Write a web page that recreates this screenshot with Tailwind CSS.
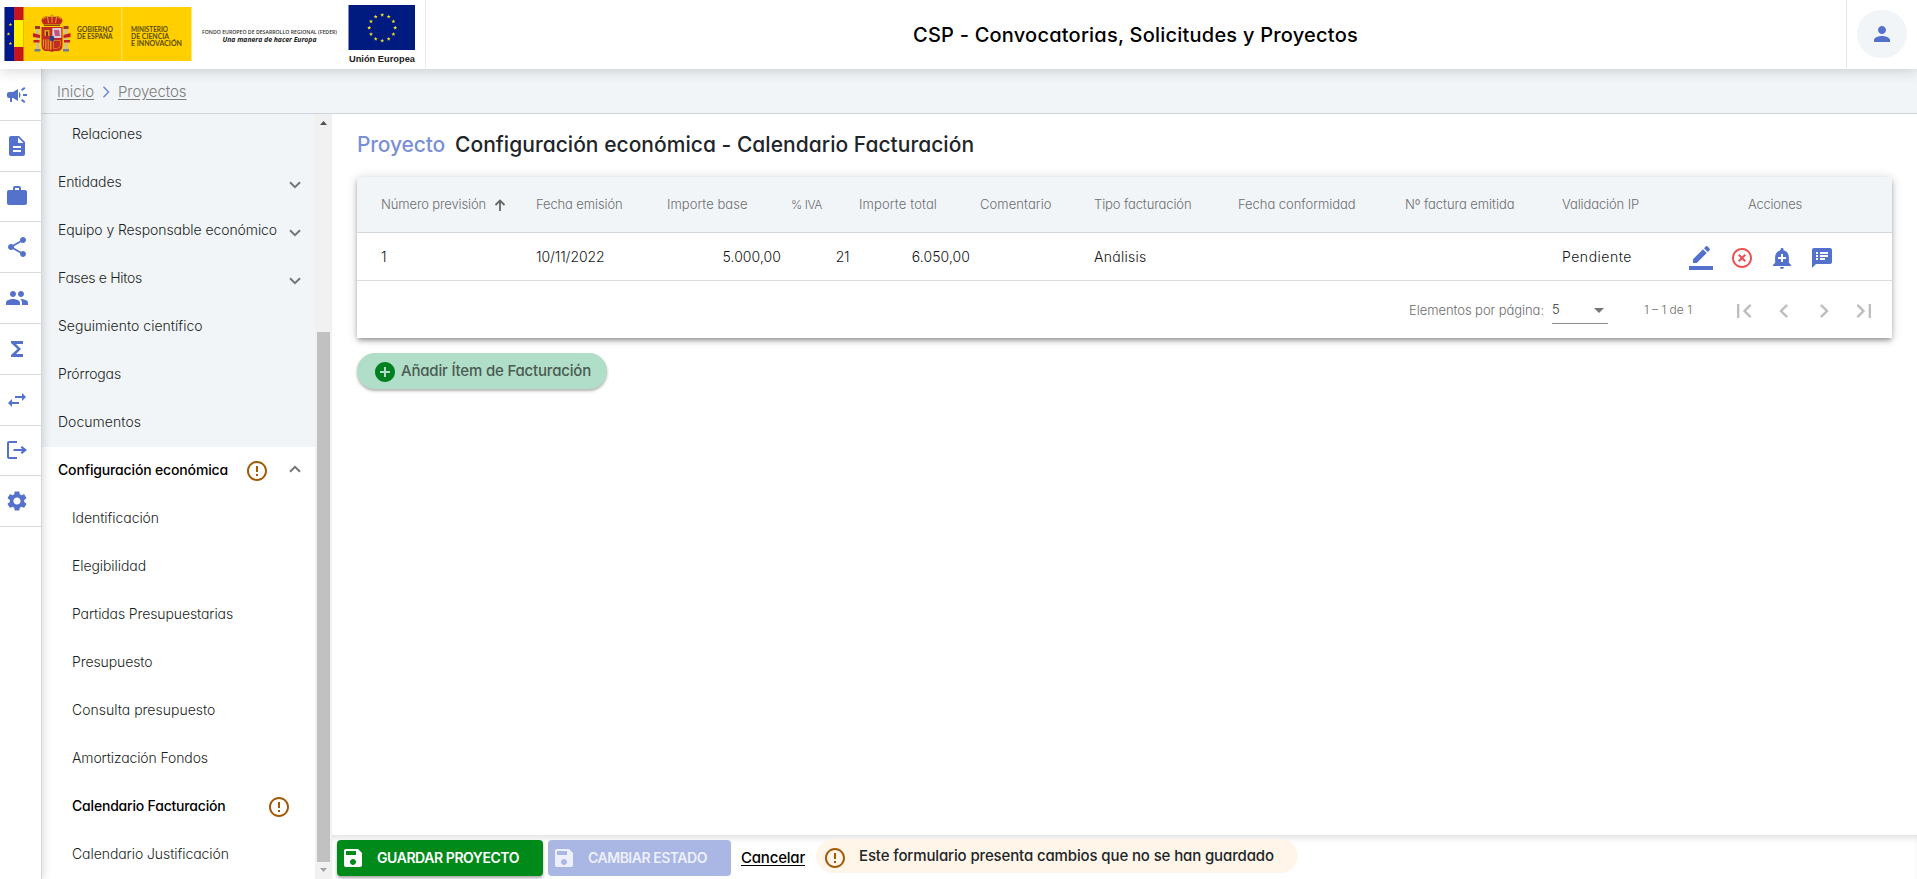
<!DOCTYPE html>
<html lang="es">
<head>
<meta charset="utf-8">
<title>CSP - Convocatorias, Solicitudes y Proyectos</title>
<script src="https://cdn.jsdelivr.net/npm/@tailwindcss/browser@4"></script>
</head>
<body class="flex h-[879px] w-[1917px] flex-col overflow-hidden bg-white font-['Inter',sans-serif] text-[#212529] [font-feature-settings:'cv11']">
<svg class="hidden">
  <symbol id="warn" viewBox="0 0 24 24"><path d="M11 15h2v2h-2zm0-8h2v6h-2zm.99-5C6.47 2 2 6.48 2 12s4.47 10 9.99 10C17.52 22 22 17.52 22 12S17.52 2 11.99 2zM12 20c-4.42 0-8-3.58-8-8s3.58-8 8-8 8 3.58 8 8-3.58 8-8 8z"/></symbol>
  <symbol id="down" viewBox="0 0 12 8"><path d="M1 1.2l5 5 5-5" fill="none" stroke="currentColor" stroke-width="2"/></symbol>
  <symbol id="save" viewBox="0 0 24 24"><path d="M17 3H5c-1.11 0-2 .9-2 2v14c0 1.1.89 2 2 2h14c1.1 0 2-.9 2-2V7l-4-4zm-5 16c-1.66 0-3-1.34-3-3s1.34-3 3-3 3 1.34 3 3-1.34 3-3 3zm3-10H5V5h10v4z"/></symbol>
  <symbol id="star" viewBox="-1 -1 2 2"><path d="M0-1L.23-.31H.95L.37.12.59.81 0 .38-.59.81-.37.12-.95-.31H-.23z"/></symbol>
</svg>

<header class="relative z-20 flex h-[69px] shrink-0 items-start bg-white shadow-[0_3px_12px_rgba(0,0,0,0.14)]">
  <div class="flex h-[68px] w-[426px] shrink-0 border-r border-[#e9ecef]">
    <svg class="block h-[68px] w-[425px]" viewBox="0 0 425 68">
      <rect x="4.500" y="7" width="187" height="54" fill="#ffcf00"/>
      <rect x="4.500" y="7" width="9.500" height="54" fill="#00188f"/>
      <rect x="14" y="7" width="9.500" height="54" fill="#c4161c"/>
      <rect x="14" y="20" width="9.500" height="27" fill="#fff200"/>
      <g fill="#ffe800"><use href="#star" x="8.400" y="22.500" width="4" height="4"/><use href="#star" x="6.500" y="32" width="4" height="4"/><use href="#star" x="8.400" y="41.500" width="4" height="4"/></g>
      <rect x="121.300" y="7" width="1" height="54" fill="#ffe27a"/>
      <!-- coat of arms -->
      <g>
        <rect x="36" y="28" width="3" height="21" fill="#c9c0a0"/><rect x="64.500" y="28" width="3" height="21" fill="#c9c0a0"/>
        <rect x="35" y="26" width="5" height="3" fill="#9c3b22"/><rect x="63.500" y="26" width="5" height="3" fill="#9c3b22"/>
        <path d="M33 33l7 2v3l-7-1zM70.500 33l-7 2v3l7-1zM33.500 40h6v2.500h-6zM64 40h6v2.500h-6z" fill="#c8201f"/>
        <path d="M34.500 49h6v2.500h-6zM63 49h6v2.500h-6z" fill="#6f7f8c"/>
        <path d="M41.500 27h21v18q0 6-5 6h-3l-2.500 1-2.500-1h-3q-5 0-5-6z" fill="#c32a20"/>
        <rect x="52.300" y="28" width="9" height="10" fill="#e2c8cf"/>
        <path d="M54 30h5l1 6h-5z" fill="#bb5583"/>
        <path d="M44.500 30h5v6h-5z" fill="#d9a520"/><path d="M46 31.500h2v4.500h-2z" fill="#7a2b10"/>
        <path d="M43 39.500h8.500v10h-4q-4.500 0-4.500-5z" fill="#e79b17"/>
        <path d="M44.600 39.500v9M47 39.500v10M49.300 39.500v10" stroke="#c0201d" stroke-width="1.100"/>
        <path d="M53.500 40.500h7v4q0 4-4 4h-3z" fill="none" stroke="#d58a1c" stroke-width=".8"/>
        <ellipse cx="52" cy="38.500" rx="2.300" ry="2.800" fill="#27418e"/>
        <path d="M43.500 24.500q-4-5 0-7 3-2 5.500-.7 1.500-1.300 3-1.300t3 1.300q2.500-1.300 5.500.7 4 2 0 7z" fill="#c4281c"/>
        <path d="M42.500 19q4-3.500 9.500-2.500 5.500-1 9.500 2.500M45 24.500h14M52 14v9M47.500 17l1 6M56.500 17l-1 6" fill="none" stroke="#dba21d" stroke-width="1"/>
        <path d="M44 25.300h16" stroke="#8b3412" stroke-width="1.200"/>
      </g>
      <g font-family="Lato,sans-serif" font-weight="700" font-size="6.600" fill="#5b4a00">
        <text x="77" y="31.500" textLength="36" lengthAdjust="spacingAndGlyphs">GOBIERNO</text><text x="77" y="38.500" textLength="35.500" lengthAdjust="spacingAndGlyphs">DE ESPAÑA</text>
        <text x="131" y="31.500" textLength="37" lengthAdjust="spacingAndGlyphs">MINISTERIO</text><text x="131" y="38.500" textLength="38" lengthAdjust="spacingAndGlyphs">DE CIENCIA</text><text x="131" y="45.700" textLength="51" lengthAdjust="spacingAndGlyphs">E INNOVACIÓN</text>
      </g>
      <text x="202" y="34" font-family="Open Sans,sans-serif" font-weight="600" font-size="5" textLength="135" lengthAdjust="spacingAndGlyphs" fill="#333">FONDO EUROPEO DE DESARROLLO REGIONAL (FEDER)</text>
      <text x="222.500" y="42.300" font-family="Open Sans,sans-serif" font-weight="700" font-style="italic" font-size="6.800" textLength="94" lengthAdjust="spacingAndGlyphs" fill="#222">Una manera de hacer Europa</text>
      <rect x="348.500" y="5" width="66.500" height="45" fill="#001b80"/>
      <g fill="#f5e51b">
        <use href="#star" x="380" y="12.800" width="4.400" height="4.400"/><use href="#star" x="386.500" y="14.500" width="4.400" height="4.400"/><use href="#star" x="391.200" y="19.300" width="4.400" height="4.400"/><use href="#star" x="393" y="25.600" width="4.400" height="4.400"/><use href="#star" x="391.200" y="32" width="4.400" height="4.400"/><use href="#star" x="386.500" y="36.700" width="4.400" height="4.400"/><use href="#star" x="380" y="38.400" width="4.400" height="4.400"/><use href="#star" x="373.500" y="36.700" width="4.400" height="4.400"/><use href="#star" x="368.800" y="32" width="4.400" height="4.400"/><use href="#star" x="367" y="25.600" width="4.400" height="4.400"/><use href="#star" x="368.800" y="19.300" width="4.400" height="4.400"/><use href="#star" x="373.500" y="14.500" width="4.400" height="4.400"/>
      </g>
      <text x="349" y="62" font-family="Liberation Sans,sans-serif" font-weight="700" font-size="9.200" textLength="66" lengthAdjust="spacingAndGlyphs" fill="#222">Unión Europea</text>
    </svg>
  </div>
  <h1 class="flex h-[68px] flex-1 items-center whitespace-nowrap pt-px pl-[487px] text-[20px] font-medium tracking-[0.22px] text-black">CSP - Convocatorias, Solicitudes y Proyectos</h1>
  <div class="flex h-[68px] w-[71px] shrink-0 items-center border-l border-[#e3e6ee] pl-[10px]">
    <div class="flex h-12 w-[50px] items-center justify-center rounded-full bg-[#f1f5f8]">
      <svg class="size-6 fill-[#5472cc]" viewBox="0 0 24 24"><path d="M12 12c2.210 0 4-1.790 4-4s-1.790-4-4-4-4 1.790-4 4 1.790 4 4 4zm0 2c-2.670 0-8 1.340-8 4v2h16v-2c0-2.660-5.330-4-8-4z"/></svg>
    </div>
  </div>
</header>

<div class="flex min-h-0 flex-1">
  <nav class="relative z-10 w-[42px] shrink-0 border-r border-[#d4d6d8] bg-white pt-px shadow-[2px_0_8px_rgba(0,0,0,0.13)]">
    <ul class="grid auto-rows-[50.8px] fill-[#5472cc] [&>li]:flex [&>li]:items-center [&>li]:border-b [&>li]:border-[#d9dbdd] [&>li]:pl-[5px] [&_svg]:size-6">
      <li><svg viewBox="0 0 24 24"><path d="M18 11v2h4v-2h-4zm-2 6.610c.96.710 2.210 1.650 3.200 2.390.4-.53.8-1.070 1.200-1.600-.99-.74-2.240-1.680-3.200-2.400-.4.540-.8 1.080-1.200 1.610zM20.400 5.600c-.4-.53-.8-1.070-1.200-1.600-.99.740-2.240 1.680-3.200 2.400.4.530.8 1.070 1.200 1.600.96-.72 2.210-1.650 3.200-2.400zM4 9c-1.100 0-2 .9-2 2v2c0 1.100.9 2 2 2h1v4h2v-4h1l5 3V6L8 9H4zm11.500 3c0-1.330-.58-2.530-1.500-3.350v6.690c.92-.81 1.500-2.010 1.500-3.340z"/></svg></li>
      <li><svg viewBox="0 0 24 24"><path d="M14 2H6c-1.100 0-1.990.9-1.990 2L4 20c0 1.100.89 2 1.990 2H18c1.100 0 2-.9 2-2V8l-6-6zm2 16H8v-2h8v2zm0-4H8v-2h8v2zm-3-5V3.500L18.500 9H13z"/></svg></li>
      <li><svg viewBox="0 0 24 24"><path d="M20 6h-4V4c0-1.110-.89-2-2-2h-4c-1.110 0-2 .89-2 2v2H4c-1.110 0-1.990.89-1.990 2L2 19c0 1.110.89 2 2 2h16c1.110 0 2-.89 2-2V8c0-1.110-.89-2-2-2zm-6 0h-4V4h4v2z"/></svg></li>
      <li><svg viewBox="0 0 24 24"><path d="M18 16.080c-.76 0-1.440.3-1.960.77L8.910 12.700c.05-.23.09-.46.09-.7s-.04-.47-.09-.7l7.050-4.110c.54.5 1.250.81 2.040.81 1.660 0 3-1.340 3-3s-1.340-3-3-3-3 1.340-3 3c0 .24.040.47.090.7L8.040 9.810C7.500 9.310 6.790 9 6 9c-1.660 0-3 1.340-3 3s1.340 3 3 3c.79 0 1.500-.31 2.040-.81l7.120 4.160c-.05.210-.08.430-.08.650 0 1.610 1.310 2.920 2.920 2.920s2.920-1.310 2.920-2.920-1.310-2.920-2.920-2.920z"/></svg></li>
      <li><svg viewBox="0 0 24 24"><path d="M16 11c1.660 0 2.990-1.340 2.990-3S17.660 5 16 5s-3 1.340-3 3 1.340 3 3 3zm-8 0c1.660 0 2.990-1.340 2.990-3S9.660 5 8 5 5 6.340 5 8s1.340 3 3 3zm0 2c-2.330 0-7 1.170-7 3.500V19h14v-2.500c0-2.330-4.670-3.500-7-3.500zm8 0c-.29 0-.62.020-.97.050 1.160.84 1.970 1.970 1.970 3.450V19h6v-2.500c0-2.330-4.670-3.500-7-3.500z"/></svg></li>
      <li><svg viewBox="0 0 24 24"><path d="M18 4H6v2l6.500 6L6 18v2h12v-3h-7l5-5-5-5h7z"/></svg></li>
      <li><svg viewBox="0 0 24 24"><path d="M6.990 11L3 15l3.990 4v-3H14v-2H6.990v-3zM21 9l-3.990-4v3H10v2h7.010v3L21 9z"/></svg></li>
      <li><svg viewBox="0 0 24 24"><path d="M17 8l-1.410 1.410L17.170 11H8.500v2h8.670l-1.580 1.580L17 16l5-4zM4 5h8V3H4c-1.100 0-2 .9-2 2v14c0 1.100.9 2 2 2h8v-2H4V5z"/></svg></li>
      <li><svg viewBox="0 0 24 24"><path d="M19.140 12.940c.04-.3.060-.61.060-.94 0-.32-.02-.64-.07-.94l2.030-1.580c.18-.14.230-.41.120-.61l-1.920-3.320c-.12-.22-.37-.29-.59-.22l-2.390.96c-.5-.38-1.030-.7-1.620-.94l-.36-2.540c-.04-.24-.24-.41-.48-.41h-3.840c-.24 0-.43.170-.47.410l-.36 2.540c-.59.240-1.130.570-1.620.94l-2.390-.96c-.22-.08-.47 0-.59.220L2.740 8.870c-.12.210-.08.470.120.610l2.030 1.580c-.05.300-.09.630-.09.940s.02.640.070.94l-2.030 1.580c-.18.140-.23.410-.12.610l1.920 3.320c.12.220.37.290.59.220l2.390-.96c.5.380 1.030.7 1.620.94l.36 2.540c.05.240.24.410.48.410h3.840c.24 0 .44-.17.470-.41l.36-2.540c.59-.24 1.130-.56 1.620-.94l2.390.96c.22.080.47 0 .59-.22l1.920-3.320c.12-.22.070-.47-.12-.61l-2.010-1.580zM12 15.600c-1.980 0-3.600-1.620-3.600-3.600s1.620-3.600 3.600-3.600 3.600 1.620 3.600 3.600-1.620 3.600-3.600 3.600z"/></svg></li>
    </ul>
  </nav>

  <div class="flex min-w-0 flex-1 flex-col">
    <div class="flex h-[45px] shrink-0 items-center border-b border-[#ced4d9] bg-[#f1f5f8] pt-0.5 pl-[15px] text-[15px] font-light text-[#7d7d7d]">
      <a class="w-[37px] underline underline-offset-2">Inicio</a>
      <svg class="mx-[8px] h-3 w-2 text-[#7089d6]" viewBox="0 0 8 12"><path d="M1.500 .8l5 5.200-5 5.200" fill="none" stroke="currentColor" stroke-width="1.500"/></svg>
      <a class="tracking-[-0.09px] underline underline-offset-2">Proyectos</a>
    </div>

    <div class="flex min-h-0 flex-1">
      <aside class="flex w-[290px] shrink-0">
        <ul class="flex w-[273px] flex-col justify-end bg-[#f1f5f8] text-sm font-light whitespace-nowrap text-[#1c1f22] [&>li]:flex [&>li]:h-12 [&>li]:shrink-0 [&>li]:items-center [&>li]:justify-between [&>li]:pr-[14px] [&>li]:pb-0.5 [&_svg]:shrink-0">
          <li class="pl-[30px] tracking-[-0.15px]">Relaciones</li>
          <li class="pl-4 tracking-[-0.13px]">Entidades<svg class="mt-1.5 h-2 w-3 text-[#757575]"><use href="#down"/></svg></li>
          <li class="pl-4 tracking-[-0.08px]">Equipo y Responsable económico<svg class="mt-1.5 h-2 w-3 text-[#757575]"><use href="#down"/></svg></li>
          <li class="pl-4 tracking-[-0.30px]">Fases e Hitos<svg class="mt-1.5 h-2 w-3 text-[#757575]"><use href="#down"/></svg></li>
          <li class="pl-4 tracking-[0.02px]">Seguimiento científico</li>
          <li class="pl-4 tracking-[-0.14px]">Prórrogas</li>
          <li class="pl-4 tracking-[0.04px]">Documentos</li>
          <li class="bg-white pl-4 font-medium tracking-[-0.15px] text-black"><span class="w-[187px] shrink-0">Configuración económica</span><svg class="mt-0.5 mr-auto size-6 fill-[#a35a05]"><use href="#warn"/></svg><svg class="mb-0.5 h-2 w-3 rotate-180 text-[#757575]"><use href="#down"/></svg></li>
          <li class="bg-white pl-[30px] tracking-[-0.06px]">Identificación</li>
          <li class="bg-white pl-[30px] tracking-[-0.08px]">Elegibilidad</li>
          <li class="bg-white pl-[30px] tracking-[-0.11px]">Partidas Presupuestarias</li>
          <li class="bg-white pl-[30px] tracking-[-0.10px]">Presupuesto</li>
          <li class="bg-white pl-[30px]">Consulta presupuesto</li>
          <li class="bg-white pl-[30px] tracking-[-0.12px]">Amortización Fondos</li>
          <li class="bg-white pl-[30px] font-medium tracking-[-0.19px] text-black">Calendario Facturación<svg class="mt-0.5 mr-[10px] size-6 fill-[#a35a05]"><use href="#warn"/></svg></li>
          <li class="bg-white pl-[30px] tracking-[-0.07px]">Calendario Justificación</li>
        </ul>
        <div class="flex w-[17px] flex-col items-center bg-[#f1f1f1]">
          <svg class="mt-[7px] h-1 w-[7px] fill-[#505050]" viewBox="0 0 7 4"><path d="M3.500 0L7 4H0z"/></svg>
          <div class="mt-[207px] h-[530px] w-[13px] bg-[#c1c1c1]"></div>
          <svg class="mt-[6px] h-1 w-[7px] fill-[#a3a3a3]" viewBox="0 0 7 4"><path d="M3.500 4L7 0H0z"/></svg>
        </div>
      </aside>

      <div class="flex min-w-0 flex-1 flex-col">
        <main class="flex min-h-0 flex-1 flex-col items-start bg-white pt-[15px] pl-[25px]">
          <h2 class="flex h-8 items-center text-[21px] font-medium whitespace-nowrap"><span class="w-[98px] tracking-[-0.16px] text-[#7b8fd8]">Proyecto</span><span class="tracking-[0.03px]">Configuración económica - Calendario Facturación</span></h2>

          <section class="mt-4 w-[1535px] bg-white shadow-[0_3px_5px_-1px_rgba(0,0,0,0.38),0_1px_10px_rgba(0,0,0,0.16)]">
            <div class="grid h-14 grid-cols-[155px_131px_124px_68px_121px_114px_144px_167px_157px_127px_1fr] items-center border-b border-[#d3d8dc] bg-[#f1f5f8] pl-6 text-[13px] font-light whitespace-nowrap text-[#6d6f71]">
              <span class="flex items-center tracking-[-0.13px]">Número previsión<svg class="ml-2 h-3 w-3" viewBox="0 0 12 12"><path d="M6 12V1.500M1.500 6L6 1.500 10.500 6" fill="none" stroke="#666" stroke-width="1.800"/></svg></span>
              <span class="tracking-[-0.12px]">Fecha emisión</span>
              <span class="tracking-[0.04px]">Importe base</span>
              <span class="text-xs tracking-[-0.42px]">% IVA</span>
              <span class="tracking-[0.14px]">Importe total</span>
              <span class="tracking-[0.07px]">Comentario</span>
              <span class="tracking-[-0.11px]">Tipo facturación</span>
              <span class="tracking-[-0.04px]">Fecha conformidad</span>
              <span class="tracking-[-0.05px]">Nº factura emitida</span>
              <span class="tracking-[-0.12px]">Validación IP</span>
              <span class="pl-[59px] tracking-[-0.23px]">Acciones</span>
            </div>
            <div class="grid h-12 grid-cols-[155px_131px_124px_68px_121px_114px_144px_167px_157px_127px_1fr] items-center border-b border-[#dcdcdc] pl-6 text-sm font-light whitespace-nowrap text-[#151515]">
              <span>1</span>
              <span class="tracking-[-0.09px]">10/11/2022</span>
              <span class="pr-[10px] text-right tracking-[0.06px]">5.000,00</span>
              <span class="pr-[10px] text-right tracking-[-0.4px]">21</span>
              <span class="pr-[10px] text-right tracking-[0.06px]">6.050,00</span>
              <span></span>
              <span class="tracking-[0.27px]">Análisis</span>
              <span></span>
              <span></span>
              <span class="tracking-[0.52px]">Pendiente</span>
              <span class="flex gap-4 pt-[3px] fill-[#5472cc] [&>svg]:size-6">
                <svg viewBox="0 0 24 24"><path d="M17.750 7L14 3.250l-10 10V17h3.750l10-10zm2.960-2.960c.39-.39.39-1.020 0-1.410L18.370.290c-.39-.39-1.020-.39-1.410 0L15 2.250 18.750 6l1.960-1.960zM0 20h24v4H0z"/></svg>
                <svg viewBox="0 0 24 24" class="ml-[0.5px] fill-[#ee4f4f]"><path d="M14.590 8L12 10.590 9.410 8 8 9.410 10.590 12 8 14.590 9.410 16 12 13.410 14.590 16 16 14.590 13.410 12 16 9.410 14.590 8zM12 2C6.470 2 2 6.470 2 12s4.470 10 10 10 10-4.470 10-10S17.530 2 12 2zm0 18c-4.410 0-8-3.590-8-8s3.590-8 8-8 8 3.590 8 8-3.590 8-8 8z"/></svg>
                <svg viewBox="0 0 24 24"><path d="M10.010 21.010c0 1.100.89 1.990 1.990 1.990s1.990-.89 1.990-1.990h-3.980zm8.870-4.190V11c0-3.250-2.250-5.970-5.290-6.690v-.72C13.590 2.710 12.880 2 12 2s-1.590.71-1.590 1.590v.72C7.370 5.030 5.120 7.750 5.120 11v5.820L3 18.940V20h18v-1.060l-2.120-2.120zM16 13.010h-3v3h-2v-3H8V11h3V8h2v3h3v2.010z"/></svg>
                <svg viewBox="0 0 24 24"><path d="M20 2H4c-1.100 0-1.990.9-1.990 2L2 22l4-4h14c1.100 0 2-.9 2-2V4c0-1.100-.9-2-2-2zM8 14H6v-2h2v2zm0-3H6V9h2v2zm0-3H6V6h2v2zm7 6h-5v-2h5v2zm3-3h-8V9h8v2zm0-3h-8V6h8v2z"/></svg>
              </span>
            </div>
            <div class="flex h-[57px] items-center justify-end pt-0.5 pr-2 text-[13px] font-light text-[#6d6d6d]">
              <span class="mt-px tracking-[-0.06px]">Elementos por página:</span>
              <div class="ml-2 flex h-[26px] w-14 items-center justify-between border-b border-[#8f8f8f] pr-[4px] text-[#333]"><span>5</span><svg class="h-[5px] w-[10px] fill-[#757575]" viewBox="0 0 10 5"><path d="M0 0h10L5 5z"/></svg></div>
              <span class="mb-px ml-9 w-[50px] text-xs whitespace-nowrap">1 – 1 de 1</span>
              <div class="ml-[30px] flex fill-[#bdbdbd] [&>svg]:mx-1.5 [&>svg]:size-7">
                <svg viewBox="0 0 24 24"><path d="M18.410 16.590L13.820 12l4.590-4.590L17 6l-6 6 6 6zM6 6h2v12H6z"/></svg>
                <svg viewBox="0 0 24 24"><path d="M15.410 7.410L14 6l-6 6 6 6 1.410-1.410L10.830 12z"/></svg>
                <svg viewBox="0 0 24 24"><path d="M10 6L8.590 7.410 13.170 12l-4.580 4.590L10 18l6-6z"/></svg>
                <svg viewBox="0 0 24 24"><path d="M5.590 7.410L10.180 12l-4.590 4.590L7 18l6-6-6-6zM16 6h2v12h-2z"/></svg>
              </div>
            </div>
          </section>

          <button class="mt-[15px] flex h-9 w-[250px] items-center rounded-full bg-[#b0dec8] pl-4 text-[15px] font-medium tracking-[-0.19px] whitespace-nowrap text-[#4c5a52] shadow-[0_2px_3px_rgba(0,0,0,0.3)]"><svg class="mt-0.5 mr-1 size-6 shrink-0 fill-[#008020]" viewBox="0 0 24 24"><path d="M12 2C6.480 2 2 6.480 2 12s4.480 10 10 10 10-4.480 10-10S17.520 2 12 2zm5 11h-4v4h-2v-4H7v-2h4V7h2v4h4v2z"/></svg>Añadir Ítem de Facturación</button>
        </main>

        <footer class="flex h-11 shrink-0 items-start bg-white pt-[5px] pl-[5px] whitespace-nowrap shadow-[inset_0_6px_6px_-3px_rgba(0,0,0,0.12)]">
          <button class="flex h-9 w-[206px] items-center rounded bg-[#008a1a] pl-1 text-sm font-semibold tracking-[-0.43px] text-white shadow-[0_2px_3px_rgba(0,0,0,0.35)]"><svg class="mr-3 size-6 shrink-0 fill-white"><use href="#save"/></svg>GUARDAR PROYECTO</button>
          <button class="ml-[5px] flex h-9 w-[183px] items-center rounded bg-[#aab7e5] pl-1 text-sm font-semibold tracking-[-0.48px] text-[#edf0fb]"><svg class="mr-3 size-6 shrink-0 fill-[#edf0fb]"><use href="#save"/></svg>CAMBIAR ESTADO</button>
          <a class="ml-[10px] flex h-9 w-[75px] items-center text-[15px] font-medium tracking-[-0.20px] text-black underline underline-offset-2">Cancelar</a>
          <div class="-mt-px flex h-[34px] w-[482px] items-center rounded-full bg-[#fff5e8] pl-[7px] text-[15px] font-medium tracking-[-0.13px]"><svg class="mt-[3px] mr-[12px] size-6 shrink-0 fill-[#a35a05]"><use href="#warn"/></svg>Este formulario presenta cambios que no se han guardado</div>
        </footer>
      </div>
    </div>
  </div>
</div>
</body>
</html>
